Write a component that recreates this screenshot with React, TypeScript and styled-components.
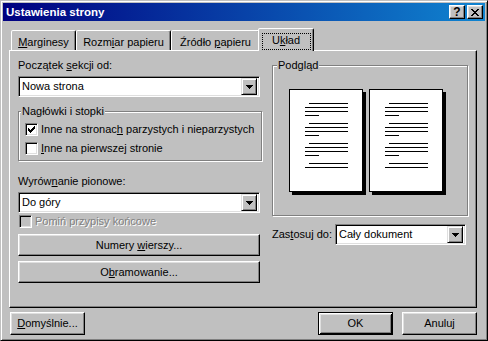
import styled, { createGlobalStyle, css } from 'styled-components';

const FACE = '#c0c0c0';

const GlobalStyle = createGlobalStyle`
  * { box-sizing: border-box; }
  html, body { margin: 0; padding: 0; background: ${FACE}; }
  body {
    font-family: 'Liberation Sans', Arial, sans-serif;
    font-size: 11px;
    line-height: 13px;
    color: #000;
  }
`;

const raised = css`
  border: 1px solid;
  border-color: #fff #000 #000 #fff;
  box-shadow: inset -1px -1px #808080, inset 1px 1px #dfdfdf;
`;

const sunken = css`
  border: 1px solid;
  border-color: #808080 #fff #fff #808080;
  box-shadow: inset 1px 1px #000, inset -1px -1px #dfdfdf;
`;

const Window = styled.div`
  width: 488px;
  height: 341px;
  background: ${FACE};
  border: 1px solid;
  border-color: ${FACE} #000 #000 ${FACE};
  box-shadow: inset 1px 1px #fff, inset -1px -1px #808080;
  padding: 2px;
  display: flex;
  flex-direction: column;
`;

const TitleBar = styled.div`
  height: 18px;
  flex: none;
  display: flex;
  align-items: center;
  justify-content: space-between;
  padding: 0 2px 0 3px;
  background: linear-gradient(to right, #000080, #1084d0);
  color: #fff;
`;

const Caption = styled.span`
  font-weight: bold;
  font-size: 11.5px;
`;

const CaptionButtons = styled.div`
  display: flex;
  gap: 2px;
`;

const CaptionButton = styled.div`
  width: 16px;
  height: 14px;
  background: ${FACE};
  ${raised};
  display: flex;
  align-items: center;
  justify-content: center;
  font-weight: bold;
  font-size: 12px;
  color: #000;
`;

const Body = styled.div`
  flex: 1;
  display: flex;
  flex-direction: column;
  padding: 7px 8px 0 6px;
`;

const TabRow = styled.div`
  display: flex;
  align-items: flex-end;
  height: 22px;
  margin-left: 2px;
  position: relative;
  z-index: 1;
`;

const Tab = styled.div<{ $width: number; $active?: boolean }>`
  flex: none;
  width: ${(p) => p.$width + (p.$active ? 4 : 0)}px;
  height: ${(p) => (p.$active ? 23 : 20)}px;
  margin: ${(p) => (p.$active ? '0 -2px -1px' : '0')};
  padding-top: ${(p) => (p.$active ? 4 : 5)}px;
  background: ${FACE};
  border-style: solid;
  border-width: 1px 1px 0 1px;
  border-color: #fff #000 transparent #fff;
  border-radius: 2px 2px 0 0;
  box-shadow: inset -1px 0 #808080;
  display: flex;
  justify-content: center;
  align-items: flex-start;
  position: relative;
  z-index: ${(p) => (p.$active ? 2 : 1)};
`;

const FocusRect = styled.span`
  height: 17px;
  width: 49px;
  border: 1px dotted #000;
  text-align: center;
`;

const Panel = styled.div`
  flex: none;
  width: 468px;
  height: 258px;
  background: ${FACE};
  border: 1px solid;
  border-color: #fff #000 #000 #fff;
  box-shadow: inset -1px -1px #808080;
  display: flex;
  gap: 9px;
  padding: 8px 0 0 8px;
`;

const Column = styled.div<{ $width: number }>`
  flex: none;
  width: ${(p) => p.$width}px;
  display: flex;
  flex-direction: column;
`;

const FieldLabel = styled.div`
  height: 13px;
  margin-bottom: 4px;
`;

const Key = styled.span`
  text-decoration: underline;
`;

const Combo = styled.div<{ $width: number }>`
  flex: none;
  width: ${(p) => p.$width}px;
  height: 21px;
  background: #fff;
  ${sunken};
  padding: 2px;
  display: flex;
  align-items: center;
`;

const ComboText = styled.span`
  flex: 1;
  padding-left: 1px;
  white-space: nowrap;
`;

const DropButton = styled.span`
  flex: none;
  width: 16px;
  height: 17px;
  background: ${FACE};
  border: 1px solid;
  border-color: #dfdfdf #000 #000 #dfdfdf;
  box-shadow: inset 1px 1px #fff, inset -1px -1px #808080;
  display: flex;
  align-items: center;
  justify-content: center;
`;

const Group = styled.div<{ $width: number; $height: number; $top: number }>`
  position: relative;
  flex: none;
  width: ${(p) => p.$width}px;
  height: ${(p) => p.$height}px;
  margin-top: ${(p) => p.$top}px;
  border: 1px solid #808080;
  box-shadow: inset 1px 1px #fff, 1px 1px #fff;
`;

const Legend = styled.span<{ $left: number }>`
  position: absolute;
  top: -7px;
  left: ${(p) => p.$left}px;
  padding: 0 1px;
  background: ${FACE};
  white-space: nowrap;
`;

const CheckList = styled.div`
  display: flex;
  flex-direction: column;
  padding: 8px 0 0 6px;
`;

const CheckRow = styled.div<{ $disabled?: boolean }>`
  display: flex;
  align-items: center;
  gap: 3px;
  height: ${(p) => (p.$disabled ? 15 : 19)}px;
  white-space: nowrap;
  color: ${(p) => (p.$disabled ? '#808080' : '#000')};
  text-shadow: ${(p) => (p.$disabled ? '1px 1px #fff' : 'none')};
`;

const CheckBox = styled.span<{ $disabled?: boolean }>`
  flex: none;
  width: 13px;
  height: 13px;
  background: ${(p) => (p.$disabled ? FACE : '#fff')};
  ${sunken};
  display: flex;
  align-items: center;
  justify-content: center;
`;

const DisabledRow = styled(CheckRow)`
  margin: 1px 0 0 1px;
`;

const PushButton = styled.div<{ $width: number; $height: number; $top?: number; $default?: boolean }>`
  flex: none;
  width: ${(p) => p.$width}px;
  height: ${(p) => p.$height}px;
  margin-top: ${(p) => p.$top ?? 0}px;
  background: ${FACE};
  display: flex;
  align-items: center;
  justify-content: center;
  white-space: nowrap;
  ${(p) =>
    p.$default
      ? css`
          border: 1px solid #000;
          box-shadow: inset 1px 1px #fff, inset -1px -1px #000, inset 2px 2px #dfdfdf, inset -2px -2px #808080;
        `
      : raised};
`;

const Preview = styled.div`
  display: flex;
  gap: 6px;
  padding: 23px 0 0 16px;
`;

const Page = styled.div`
  width: 74px;
  height: 103px;
  background: #fff;
  border: 1px solid #000;
  box-shadow: 3px 3px 0 #000;
`;

const ApplyRow = styled.div`
  display: flex;
  align-items: center;
  justify-content: space-between;
  height: 21px;
  margin-top: 8px;
  padding-right: 2px;
`;

const Footer = styled.div`
  display: flex;
  align-items: center;
  gap: 9px;
  margin-top: 4px;
  padding-left: 1px;
`;

const Spacer = styled.div`
  flex: 1;
`;

const Arrow = () => (
  <svg width="7" height="4" viewBox="0 0 7 4" shapeRendering="crispEdges">
    <path d="M0 0h7v1H0zM1 1h5v1H1zM2 2h3v1H2zM3 3h1v1H3z" fill="#000" />
  </svg>
);

const Check = () => (
  <svg width="7" height="7" viewBox="0 0 7 7" shapeRendering="crispEdges">
    <path
      d="M6 0h1v1H6zM5 1h2v1H5zM0 2h1v1H0zM4 2h3v1H4zM0 3h2v1H0zM3 3h3v1H3zM0 4h5v1H0zM1 5h3v1H1zM2 6h1v1H2z"
      fill="#000"
    />
  </svg>
);

const CloseGlyph = () => (
  <svg width="8" height="7" viewBox="0 0 8 7" shapeRendering="crispEdges">
    <path
      d="M0 0h2v1H0zM6 0h2v1H6zM1 1h2v1H1zM5 1h2v1H5zM2 2h4v1H2zM3 3h2v1H3zM2 4h4v1H2zM1 5h2v1H1zM5 5h2v1H5zM0 6h2v1H0zM6 6h2v1H6z"
      fill="#000"
    />
  </svg>
);

// text lines on a preview page: [x, width, y] in page-inner coords
const pageLines: [number, number, number][] = [];
[13, 33, 53, 73].forEach((top, i) => {
  pageLines.push([19, 39, top]);
  pageLines.push([15, 43, top + 4]);
  if (i < 3) {
    pageLines.push([15, 43, top + 8]);
    pageLines.push([15, 14, top + 12]);
  }
});

const PreviewPage = () => (
  <Page>
    <svg width="72" height="101" viewBox="0 0 72 101" shapeRendering="crispEdges">
      {pageLines.map(([x, w, y], i) => (
        <rect key={i} x={x} y={y} width={w} height={1} fill="#000" />
      ))}
    </svg>
  </Page>
);

const ComboBox = ({ width, value }: { width: number; value: string }) => (
  <Combo $width={width}>
    <ComboText>{value}</ComboText>
    <DropButton>
      <Arrow />
    </DropButton>
  </Combo>
);

export default function App() {
  return (
    <>
      <GlobalStyle />
      <Window>
        <TitleBar>
          <Caption>Ustawienia strony</Caption>
          <CaptionButtons>
            <CaptionButton>?</CaptionButton>
            <CaptionButton>
              <CloseGlyph />
            </CaptionButton>
          </CaptionButtons>
        </TitleBar>

        <Body>
          <TabRow>
            <Tab $width={65}>
              <span>
                <Key>M</Key>arginesy
              </span>
            </Tab>
            <Tab $width={95}>
              <span>
                Rozm<Key>i</Key>ar papieru
              </span>
            </Tab>
            <Tab $width={89}>
              <span>
                Źródło <Key>p</Key>apieru
              </span>
            </Tab>
            <Tab $width={52} $active>
              <FocusRect>
                U<Key>k</Key>ład
              </FocusRect>
            </Tab>
          </TabRow>

          <Panel>
            <Column $width={245}>
              <FieldLabel>
                Początek <Key>s</Key>ekcji od:
              </FieldLabel>
              <ComboBox width={242} value="Nowa strona" />

              <Group $width={244} $height={50} $top={14}>
                <Legend $left={2}>Nagłówki i stopki</Legend>
                <CheckList>
                  <CheckRow>
                    <CheckBox>
                      <Check />
                    </CheckBox>
                    <span>
                      Inne na stronac<Key>h</Key> parzystych i nieparzystych
                    </span>
                  </CheckRow>
                  <CheckRow>
                    <CheckBox />
                    <span>
                      <Key>I</Key>nne na pierwszej stronie
                    </span>
                  </CheckRow>
                </CheckList>
              </Group>

              <FieldLabel style={{ marginTop: 14 }}>
                Wyrów<Key>n</Key>anie pionowe:
              </FieldLabel>
              <ComboBox width={242} value="Do góry" />

              <DisabledRow $disabled>
                <CheckBox $disabled />
                <span>Pomiń przypisy końcowe</span>
              </DisabledRow>

              <PushButton $width={242} $height={22} $top={5}>
                <span>
                  Numery <Key>w</Key>ierszy...
                </span>
              </PushButton>
              <PushButton $width={242} $height={22} $top={5}>
                <span>
                  O<Key>b</Key>ramowanie...
                </span>
              </PushButton>
            </Column>

            <Column $width={196}>
              <Group $width={196} $height={151} $top={6}>
                <Legend $left={4}>Podgląd</Legend>
                <Preview>
                  <PreviewPage />
                  <PreviewPage />
                </Preview>
              </Group>
              <ApplyRow>
                <span>
                  Zas<Key>t</Key>osuj do:
                </span>
                <ComboBox width={131} value="Cały dokument" />
              </ApplyRow>
            </Column>
          </Panel>

          <Footer>
            <PushButton $width={75} $height={23}>
              <span>
                <Key>D</Key>omyślnie...
              </span>
            </PushButton>
            <Spacer />
            <PushButton $width={75} $height={23} $default>
              OK
            </PushButton>
            <PushButton $width={75} $height={23}>
              Anuluj
            </PushButton>
          </Footer>
        </Body>
      </Window>
    </>
  );
}
